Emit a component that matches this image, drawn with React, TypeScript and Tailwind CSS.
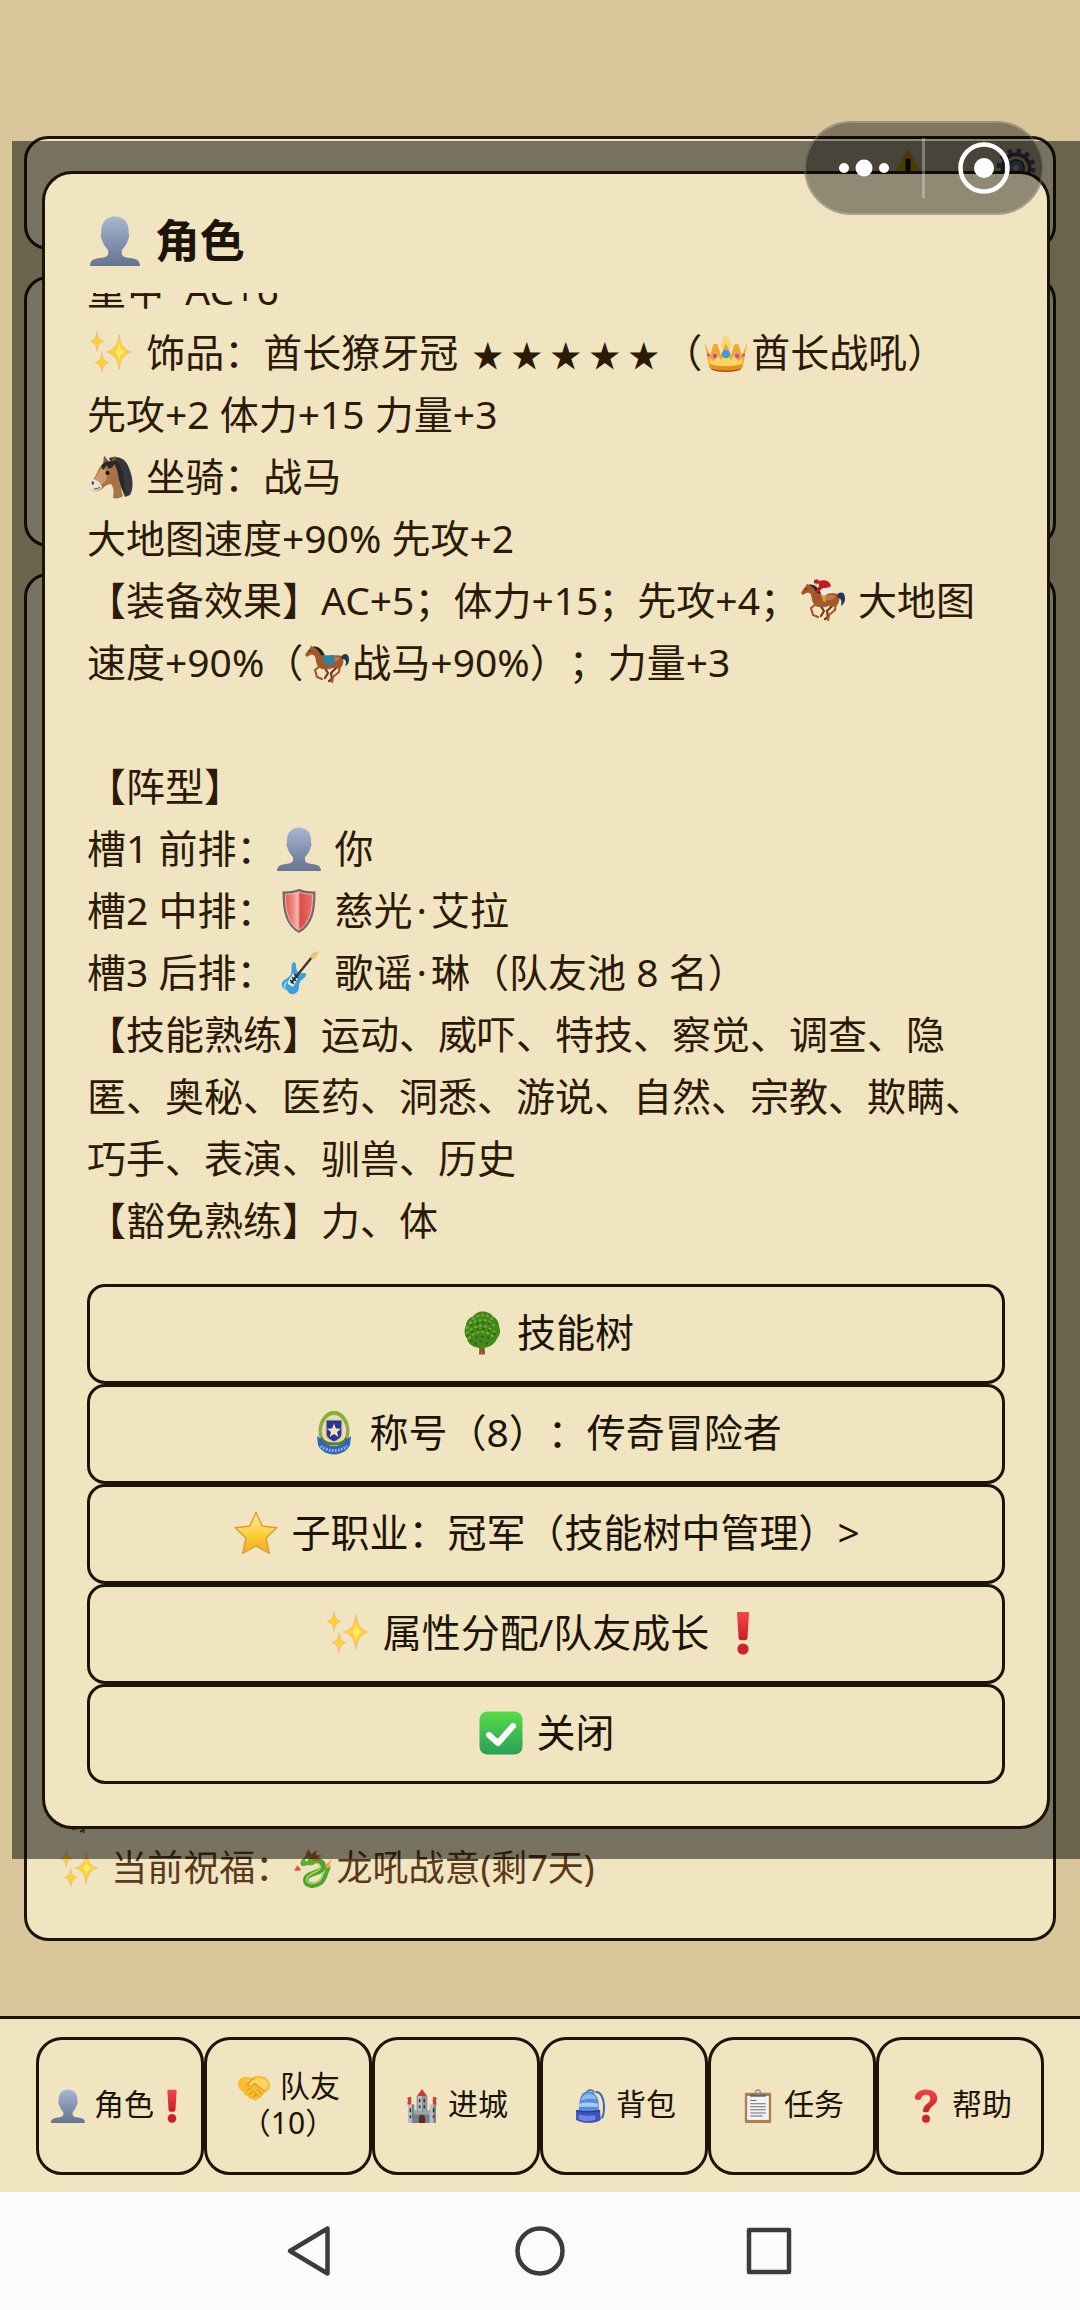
import { useState } from "react";
import type { ReactNode } from "react";
import clsx from "clsx";

type IconProps = { className?: string };

function Glyph({ className, children }: { className?: string; children: ReactNode }) {
  return (
    <svg
      viewBox="0 0 44 44"
      aria-hidden="true"
      className={clsx("inline-block shrink-0 align-[-8px]", className)}
    >
      {children}
    </svg>
  );
}

function PersonIcon({ className }: IconProps) {
  return (
    <Glyph className={className}>
      <defs>
        <linearGradient id="person" x1="0" y1="0" x2="0" y2="1">
          <stop offset="0" stopColor="#a9b7cf" />
          <stop offset="0.55" stopColor="#8191ad" />
          <stop offset="1" stopColor="#65748f" />
        </linearGradient>
      </defs>
      <path
        fill="url(#person)"
        d="M22 0.500c7 0 12 5 12 12v3.500c0.800 0.300 0.800 2.500-0.400 4.500-1.200 5-4 7.500-5.600 9.500v3c0 2.500 3 3.500 7 4 5.500 0.600 9 2 9 7H0c0-5 3.500-6.400 9-7 4-0.500 7-1.500 7-4v-3c-1.600-2-4.400-4.500-5.600-9.500-1.200-2-1.200-4.200-0.400-4.500v-3.500c0-7 5-12 12-12z"
      />
    </Glyph>
  );
}

function SparklesIcon({ className }: IconProps) {
  return (
    <Glyph className={className}>
      <g fill="#fbd32f" stroke="#f3b58a" strokeWidth="0.8">
        <path d="M30 3.500c1.500 9.500 3.500 15 12.500 17.500-9 2.500-11 8-12.500 17.500-1.500-9.500-3.500-15-12.500-17.500 9-2.500 11-8 12.500-17.500z" />
        <path d="M8 0.800c0.800 6 2.200 8.200 6.800 9.700-4.600 1.500-6 3.700-6.800 9.700-0.800-6-2.200-8.200-6.800-9.700 4.600-1.500 6-3.700 6.800-9.700z" />
        <path d="M13 21.500c0.800 6 2.200 8.500 7 10-4.800 1.500-6.200 4-7 10-0.800-6-2.200-8.500-7-10 4.800-1.500 6.200-4 7-10z" />
      </g>
      <path fill="#ffe76a" d="M30 12c1 5 2.500 7.500 7 9-4.500 1.500-6 4-7 9-0.600-5-1.500-7-4-9 2.500-2 3.400-4 4-9z" />
    </Glyph>
  );
}

function CrownIcon({ className }: IconProps) {
  return (
    <Glyph className={className}>
      <path fill="#f8d575" d="M22 4c3 2 5 6 5 12l-5 8-5-8c0-6 2-10 5-12z" />
      <path
        fill="#f2a72c"
        d="M0.500 11l5.500 14 3-10c0-3 5-3 5 0l3 9 5-12 5 12 3-9c0-3 5-3 5 0l3 10 5.500-14-5 26c-6 4.500-27 4.500-33 0z"
      />
      <path fill="#fbd466" d="M5 27l1 6c8 3 24 3 32 0l1-6-5 3-4-6-3 5-5-8-5 8-3-5-4 6z" />
      <path fill="#e98f1d" d="M6 33c8 3 24 3 32 0l-0.800 4c-8 3-22.400 3-30.400 0z" />
      <path fill="#a9481c" d="M7 37.500c8 2.500 22 2.500 30 0l-0.400 1.200c-8 3-21.200 3-29.200 0z" />
      <circle cx="22" cy="23" r="4.200" fill="#3e9bdc" />
      <circle cx="11" cy="25" r="2.200" fill="#b54fc0" />
      <circle cx="33" cy="25" r="2.200" fill="#b54fc0" />
      <circle cx="4.500" cy="24" r="1.500" fill="#d04796" />
      <circle cx="39.500" cy="24" r="1.500" fill="#d04796" />
    </Glyph>
  );
}

function HorseFaceIcon({ className }: IconProps) {
  return (
    <Glyph className={className}>
      <path fill="#35373b" d="M20 3c10-3 17 1 20 10 4 9 5 20 1 27l-5 2c-3-8-9-22-16-39z" />
      <path fill="#a87347" d="M14 9c6-4 13-2 16 6 3 9 0 14 4 26-2 2-7 3-10 2 1-6 1-10-2-14-5 0-7 4-11 6-4 2-9 2-10-2-1-5 4-9 6-13 2-4 3-8 7-11z" />
      <path fill="#cf9a6a" d="M13 13c3 0 5 4 5 8 0 5-4 8-8 10l-5-6c3-4 4-9 8-12z" />
      <path fill="#eae1d9" d="M4 24c4 1 8 4 9 8-3 4-8 5-11 3-3-3-2-8 2-11z" />
      <path fill="#8c5c37" d="M14 9l1-8.500 5 6zM22 6l4-5.500 1.500 8z" />
      <path fill="#26282b" d="M12 11c3-5 10-6 13-3 0 4-3 6-6 5l-1-3-4 5zM25 5c6 3 8 9 9 15 1 7 1 13 4 19-6-5-8-13-9-20-1-6-3-10-6-12z" />
      <circle cx="18.500" cy="18" r="2" fill="#1c130d" />
      <ellipse cx="3.800" cy="28" rx="1.200" ry="1.800" fill="#4b352c" />
      <path d="M5 34c3 0 5-1 6-2" fill="none" stroke="#4b352c" />
    </Glyph>
  );
}

// galloping horse shared by the mount and the jockey
function HorseBody() {
  return (
    <>
      <g fill="none" strokeWidth="2.200" strokeLinejoin="round" strokeLinecap="round">
        <path stroke="#6f371a" d="M19 26l4 6-3 5M32 26l-6 6 1 6-3 2" />
        <path stroke="#a4592c" d="M15 25l-5 4 2 7 5 2M35 23l-1 8-6 5-1 5" />
      </g>
      <path
        fill="#a4592c"
        d="M0 14c1-2 3-5 5-7l1-2.500 2 2c5 1 7 6 11 8 6 1 11-1 16 0 3 1 4 5 3 8-1 4-3 5-5 5-3-2-7 0-11 1-4 0-8-1-9-3-2-3-2-6-3-10-1-2-3-2-5-1.500L2 16z"
      />
      <path fill="#c47a45" d="M20 16c5 1 10-1 15 1-2 4-8 5-14 3z" />
      <path fill="#26211f" d="M7 6c6-2 11 3 13 9l-4-1c-2-4-5-7-9-8z" />
      <circle cx="5" cy="10" r="0.800" fill="#1c130d" />
    </>
  );
}

function HorseIcon({ className }: IconProps) {
  return (
    <Glyph className={className}>
      <HorseBody />
      <path fill="#153d4c" d="M36 16c3-5 8-3 8 2 0 4-1 6-4 7 2-4 1-7-3-7z" />
      <path fill="#2a86a8" d="M18 14c4 1 8 0 11 0l1 8c-4 2-7 2-11 1z" />
    </Glyph>
  );
}

function JockeyIcon({ className }: IconProps) {
  return (
    <Glyph className={className}>
      <HorseBody />
      <path fill="#24365a" d="M36 16c3-4 8-3 8 3 0 4-1 6-4 8 1-5 0-8-3-8z" />
      <path fill="#efe9e4" d="M24 6l6 1 1 6-5 2-3 3-3-2z" />
      <path fill="#c01f22" d="M18 2c6-2 11 0 12 5-2 2-6 2-8 2l-6 5-2-1 4-6z" />
      <circle cx="15.500" cy="2.800" r="2.600" fill="#b3202a" />
      <path fill="#e7b38a" d="M13.500 4l3.500 1-2 2z" />
      <path fill="#d9a72b" d="M21 16h3l1 7-3-1z" />
    </Glyph>
  );
}

function ShieldIcon({ className }: IconProps) {
  return (
    <Glyph className={className}>
      <defs>
        <linearGradient id="shield" x1="0" y1="0" x2="1" y2="0">
          <stop offset="0" stopColor="#d9504e" />
          <stop offset="0.3" stopColor="#f08783" />
          <stop offset="0.46" stopColor="#f7b9b3" />
          <stop offset="0.54" stopColor="#dd4b47" />
          <stop offset="1" stopColor="#e67873" />
        </linearGradient>
      </defs>
      <path
        d="M22 1c4 2 9 2.500 15.500 2.500 0 17-2 32-15.500 39.500C8.500 35.500 6.500 20.500 6.500 3.500 13 3.500 18 3 22 1z"
        fill="url(#shield)"
        stroke="#75696a"
        strokeWidth="2"
      />
      <path
        d="M22 3c4 1.600 8 2.200 13.500 2.300 0 15-2 28.500-13.500 35.500C10.500 33.800 8.500 20.300 8.500 5.300 14 5.200 18 4.600 22 3z"
        fill="none"
        stroke="#dcc9c6"
        strokeWidth="0.8"
      />
    </Glyph>
  );
}

function GuitarIcon({ className }: IconProps) {
  return (
    <Glyph className={className}>
      <path
        fill="#3ba0dd"
        d="M15 13c1-3 4-2 4 1 0 4 1 7 4 8 3 1 5-1 6 1 1 3-4 5-6 8-2 4 0 9-4 11-4 3-8 0-9-3-3-1-6-3-5-7 1-4 7-4 9-9 1-3 0-6 1-10z"
      />
      <path fill="#e9f6fc" d="M16 22l5 5-5 9-5-3c-1-3 3-6 5-11z" />
      <path d="M14 32L35 6" stroke="#3a3432" strokeWidth="2.400" />
      <path d="M13 29l4 4M15 26l4 4M17 23l4 4" stroke="#22272c" strokeWidth="1.400" />
      <path fill="#e5c873" d="M33 6l2-4 7-2-2 5-4 4z" />
      <path fill="#8ed0f3" d="M7 33c1-2 2-3 4-3-2 2-3 5-2 8-2-1-3-3-2-5z" />
    </Glyph>
  );
}

function TreeIcon({ className }: IconProps) {
  return (
    <Glyph className={className}>
      <path fill="#8d5b2d" d="M19.500 32h5l0.500 11.500h-6z" />
      <path
        fill="#45871c"
        d="M22 0.500c5-0.500 9 2 11 5 4 2 6 6 6 10 2 4 1 9-2 12-2 5-6 8-11 9-3 1-7 1-9 0-5-1-9-4-10-9-3-4-3-9-1-13 0-4 3-8 7-9 2-3 5-5 9-5z"
      />
      <path
        fill="none"
        stroke="#74b434"
        strokeWidth="2"
        strokeLinecap="round"
        strokeDasharray="1 4"
        d="M10 12c3-5 8-8 13-8 5 0 9 3 11 7M7 17c4-5 10-8 16-8 6 0 10 4 13 8M7 22c5-5 11-8 16-7 5 1 9 4 13 7M9 27c4-4 9-7 14-6 5 0 8 3 11 5"
      />
      <path
        fill="none"
        stroke="#2c6812"
        strokeWidth="2"
        strokeLinecap="round"
        strokeDasharray="1 5"
        d="M7 25c4-4 9-7 14-7 6 0 11 2 16 7M11 30c4-4 9-5 13-4 4 0 6 1 9 3M15 33c4-3 9-3 13 0M11 14c6-3 15-3 22 0"
      />
    </Glyph>
  );
}

function BadgeIcon({ className }: IconProps) {
  return (
    <Glyph className={className}>
      <ellipse cx="22" cy="20" rx="15.500" ry="19.500" fill="#93a758" />
      <ellipse cx="22" cy="20" rx="12" ry="16" fill="#e9dfae" />
      <path d="M9 12c4-8 9-11 13-11s9 3 13 11" fill="none" stroke="#78b82c" strokeWidth="2.500" />
      <path d="M14 9h16v15c-1 4-5 6-8 7-3-1-7-3-8-7z" fill="#2a34a0" stroke="#d9cf90" strokeWidth="1.200" />
      <path fill="#f4e7b4" d="M22 12.500l1.900 5 5.100 0.200-4 3.300 1.400 5-4.400-2.900-4.400 2.900 1.400-5-4-3.300 5.100-0.200z" />
      <path d="M9 27c5 8 21 8 26 0" fill="none" stroke="#5d7a2c" strokeWidth="3" />
      <path fill="#2f66b8" d="M5 25l5 4c3 4 7 6 12 6s9-2 12-6l5-4-1 9c-3 6-9 9.500-16 9.500S9 40 6 34z" />
      <path d="M9 35c6 6 20 6 26 0" fill="none" stroke="#9cc0e6" strokeWidth="3" strokeDasharray="1.500 1.500" />
    </Glyph>
  );
}

function StarIcon({ className }: IconProps) {
  return (
    <Glyph className={className}>
      <defs>
        <linearGradient id="star" x1="0" y1="0" x2="0" y2="1">
          <stop offset="0" stopColor="#fdf09a" />
          <stop offset="0.600" stopColor="#fbcb2d" />
          <stop offset="1" stopColor="#f3ab1b" />
        </linearGradient>
      </defs>
      <path
        d="M22 1.500l6.200 13.500 14.600 1.800-10.800 10.200 3.300 15.500-13.300-7.700-13.300 7.700 3.300-15.500L1.200 16.800l14.600-1.800z"
        fill="url(#star)"
        stroke="#dd9a3a"
        strokeWidth="1.400"
        strokeLinejoin="round"
      />
    </Glyph>
  );
}

function RedMarkDefs() {
  return (
    <defs>
      <linearGradient id="mark" x1="0" y1="0" x2="0" y2="1">
        <stop offset="0" stopColor="#f4474c" />
        <stop offset="1" stopColor="#c81d24" />
      </linearGradient>
    </defs>
  );
}

function BangIcon({ className }: IconProps) {
  return (
    <Glyph className={className}>
      <RedMarkDefs />
      <path fill="url(#mark)" d="M17 1h10c0.800 0 1 0.600 1 1.400l-1.600 25c-0.300 2.600-8.500 2.600-8.800 0l-1.600-25C16 1.600 16.200 1 17 1z" />
      <circle cx="22" cy="38" r="5.600" fill="#cf2027" />
    </Glyph>
  );
}

function QuestionIcon({ className }: IconProps) {
  return (
    <Glyph className={className}>
      <RedMarkDefs />
      <path
        fill="url(#mark)"
        d="M22 0.500c9 0 14.500 5 14.500 11.500 0 9-9.500 9.500-10.500 16.500-0.600 2.300-8 2.300-8-0.500 0.500-9 9.500-9 9.500-15.500 0-3-2-5-5.500-5s-5.500 2-6.500 5c-1 2.500-8 1.500-8-1 0.500-6 5.500-11 14.500-11z"
      />
      <circle cx="22" cy="38.500" r="5.200" fill="#d4242a" />
    </Glyph>
  );
}

function CheckIcon({ className }: IconProps) {
  return (
    <Glyph className={className}>
      <defs>
        <linearGradient id="check" x1="0" y1="0" x2="0" y2="1">
          <stop offset="0" stopColor="#55dc46" />
          <stop offset="1" stopColor="#27a15a" />
        </linearGradient>
      </defs>
      <rect x="0.500" y="0.500" width="43" height="43" rx="8" fill="url(#check)" />
      <path d="M10 24l9 8L34 15" fill="none" stroke="#fff" strokeWidth="6" strokeLinecap="round" strokeLinejoin="round" />
    </Glyph>
  );
}

function DragonIcon({ className }: IconProps) {
  return (
    <Glyph className={className}>
      <path
        d="M20 14c9-3 14 1 13 6-1 7-19 6-19 14 0 6 9 8 16 3 5-4 5-10 8-16"
        fill="none"
        stroke="#4fa431"
        strokeWidth="6"
        strokeLinecap="round"
      />
      <path
        d="M22 16c6-1 8 1 8 4 0 6-15 6-15 14 1 5 8 5 13 2 4-3 5-8 7-13"
        fill="none"
        stroke="#b4d65a"
        strokeWidth="1.600"
      />
      <path fill="#5aae35" d="M9 13c2-4 8-8 13-6 5 2 5 8 1 10-4 2-7 0-11 2-3 0-5-2-3-6z" />
      <path fill="#b06a27" d="M13 9L17 0l3 6 6-5-1 6 6 0-5 4 4 3-8-1-4-4z" />
      <path fill="#e2513c" d="M1 24l4-6 4 5-3 1z" />
      <path fill="#f0a53a" d="M36 17l7-6-3 6 2 2-5 3z" />
      <circle cx="15" cy="12" r="1.500" fill="#fff4b0" />
    </Glyph>
  );
}

function HandshakeIcon({ className }: IconProps) {
  return (
    <Glyph className={className}>
      <path
        fill="#f7bd33"
        d="M1 17c1-5 3-8 6-9 5-1 10 1 14 0 5-3 11-2 15 0 4 2 7 7 7 11 0 5-4 7-8 10-2 4-5 6-8 7-2 3-4 3-6 1-4 0-6-2-7-4-3-1-5-3-5-5-5-3-8-7-8-11z"
      />
      <path fill="#fdd65f" d="M4 13c5-3 10 0 13 0l-3 7c3 2 7-2 9-4l11 9c3-2 6-4 7-7-1-4-4-8-8-8-4-1-7-1-11 2-4 1-8-1-12-1-3 0-5 1-6 2z" />
      <path
        d="M21 10c-4 3-7 6-7 9 3 3 7-1 9-3l12 10M13 25l5-3M16 30l5-4M21 34l4-4M28 33l-5-5M32 30l-6-6"
        fill="none"
        stroke="#d89120"
        strokeWidth="1.300"
        strokeLinecap="round"
      />
    </Glyph>
  );
}

function CastleIcon({ className }: IconProps) {
  return (
    <Glyph className={className}>
      <path fill="#8c959c" d="M15 9h14v35h-14z" />
      <path fill="#b7bfc4" d="M4 20h8v24h-8zM32 20h8v24h-8zM17 9h5v30h-5z" />
      <path fill="#77818a" d="M9 20h3v24h-3zM37 20h3v24h-3zM12 29h20v15h-20z" />
      <path fill="#9fa8ae" d="M12 27h3v3h3v-3h3v3h3v-3h3v3h3v-3h2v6h-20z" />
      <path fill="#cf3b35" d="M22 0l6.500 9h-13zM4 13l4-3v10h-5zM40 13l-4-3v10h5zM1 12l6-2v3zM43 12l-6-2v3z" />
      <path fill="#30373d" d="M18 13h2v4h-2zM24 13h2v4h-2zM18 21h2v4h-2zM24 21h2v4h-2zM6 25h2v5h-2zM36 25h2v5h-2zM6 34h2v4h-2zM36 34h2v4h-2z" />
      <path fill="#5b2d1c" d="M18 44v-7c0-5 8-5 8 0v7z" />
    </Glyph>
  );
}

function BackpackIcon({ className }: IconProps) {
  return (
    <Glyph className={className}>
      <path d="M29 4c7-1 10 7 11 16 0.500 8 0 14-3 18" fill="none" stroke="#4b62ae" strokeWidth="2.600" />
      <path d="M18 5c0-5 9-5 9 0" fill="none" stroke="#5c6c8f" strokeWidth="2" />
      <path fill="#5b8ade" d="M8 20C9 8 13 3 20 3s11 5 13 13l1 24c-7 4-19 4-28 0z" />
      <path fill="#8db9f0" d="M11 13c3-8 13-9 18-3l1 4c-6-2-13-2-19 1z" />
      <path fill="#a8d0e8" d="M8 19c8-2 16-2 24 0v4H8z" />
      <path fill="#3f4fc0" d="M4 28c10 2 20 2 31 0l1 12c-8 5-23 5-32 0z" />
      <path fill="#6f83e2" d="M7 33c8 2 15 2 22 1v6c-7 2-15 2-22-1z" />
      <path d="M4 28c10 2 20 2 31 0" fill="none" stroke="#27348c" strokeWidth="1.500" />
    </Glyph>
  );
}

function ClipboardIcon({ className }: IconProps) {
  return (
    <Glyph className={className}>
      <rect x="5" y="5" width="34" height="39" rx="1.500" fill="#b07d4c" />
      <rect x="8" y="9" width="28" height="31" fill="#f4f3f4" />
      <path d="M12 15h8M12 19h20M12 23h20M12 27h20M12 31h20M12 35h16" stroke="#6d6d73" strokeWidth="1.300" />
      <path fill="#65625f" d="M12 7h20v3h-20z" />
      <circle cx="22" cy="4" r="3" fill="none" stroke="#8f8b88" strokeWidth="1.600" />
    </Glyph>
  );
}

function WarningIcon({ className }: IconProps) {
  return (
    <Glyph className={className}>
      <path fill="#f4c712" d="M19 5c1.500-3 4.500-3 6 0l17 33c1 2 0 4-2 4H4c-2 0-3-2-2-4z" />
      <path fill="#1f1a12" d="M19 13h6v17h-6zM19 34h6v5h-6z" />
    </Glyph>
  );
}

function GearIcon({ className }: IconProps) {
  return (
    <Glyph className={className}>
      <circle cx="22" cy="22" r="19" fill="none" stroke="#5c6480" strokeWidth="5" strokeDasharray="5 4.950" />
      <circle cx="22" cy="22" r="15" fill="none" stroke="#4a516a" strokeWidth="4" />
      <circle cx="22" cy="22" r="9" fill="#7a8298" stroke="#3c4156" strokeWidth="2" />
      <circle cx="22" cy="22" r="3" fill="#c9ccd6" />
    </Glyph>
  );
}

const bodyIcon = "mr-[3px] ml-[2px] size-[44px]";
const navIcon = "mx-[1px] size-[34px] align-[-6px]";

function Rating({ value }: { value: number }) {
  return (
    <span className="text-[31px] leading-none">
      {Array.from({ length: value }, (_, i) => (
        <span key={i} className="px-1">
          ★
        </span>
      ))}
    </span>
  );
}

function CharacterSheet() {
  return (
    <div className="mb-[33px] flex min-h-0 flex-1 flex-col justify-end overflow-hidden text-[39px] leading-[62px] text-[#2b1a08]">
      <p>重甲&nbsp; AC+6</p>
      <p>
        <SparklesIcon className={bodyIcon} /> 饰品：酋长獠牙冠 <Rating value={5} />（
        <CrownIcon className={bodyIcon} />
        酋长战吼）
      </p>
      <p>先攻+2 体力+15 力量+3</p>
      <p>
        <HorseFaceIcon className={bodyIcon} /> 坐骑：战马
      </p>
      <p>大地图速度+90% 先攻+2</p>
      <p>
        【装备效果】AC+5；体力+15；先攻+4；
        <JockeyIcon className={bodyIcon} /> 大地图速度+90%（
        <HorseIcon className={bodyIcon} />
        战马+90%）；力量+3
      </p>
      <p className="mt-[62px]">【阵型】</p>
      <p>
        槽1 前排：
        <PersonIcon className={bodyIcon} /> 你
      </p>
      <p>
        槽2 中排：
        <ShieldIcon className={bodyIcon} /> 慈光<span className="px-1">·</span>艾拉
      </p>
      <p>
        槽3 后排：
        <GuitarIcon className={bodyIcon} /> 歌谣<span className="px-1">·</span>琳（队友池 8 名）
      </p>
      <p>【技能熟练】运动、威吓、特技、察觉、调查、隐匿、奥秘、医药、洞悉、游说、自然、宗教、欺瞒、巧手、表演、驯兽、历史</p>
      <p>【豁免熟练】力、体</p>
    </div>
  );
}

function SheetButton({ onClick, children }: { onClick?: () => void; children: ReactNode }) {
  return (
    <button
      type="button"
      onClick={onClick}
      className="h-[100px] w-full rounded-[18px] border-3 border-[#1c1408] pb-1 text-[39px] leading-[62px] text-[#1c1408]"
    >
      {children}
    </button>
  );
}

function CharacterModal({ onClose }: { onClose: () => void }) {
  return (
    <div className="absolute top-[141px] right-0 bottom-[157px] left-3 flex flex-col bg-black/50 p-[30px]">
      <section
        role="dialog"
        aria-labelledby="sheet-title"
        className="flex min-h-0 flex-1 flex-col rounded-[30px] border-3 border-[#1c1408] bg-[#f1e4c1] p-[42px]"
      >
        <h1 id="sheet-title" className="mb-[27px] text-[45px] leading-[50px] font-bold text-[#1c1408]">
          <PersonIcon className="mx-[3px] size-[50px]" /> 角色
        </h1>
        <CharacterSheet />
        <div className="flex flex-col">
          <SheetButton>
            <TreeIcon className={bodyIcon} /> 技能树
          </SheetButton>
          <SheetButton>
            <BadgeIcon className={bodyIcon} /> 称号（8）：传奇冒险者
          </SheetButton>
          <SheetButton>
            <StarIcon className={bodyIcon} /> 子职业：冠军（技能树中管理）&gt;
          </SheetButton>
          <SheetButton>
            <SparklesIcon className={bodyIcon} /> 属性分配/队友成长 <BangIcon className={bodyIcon} />
          </SheetButton>
          <SheetButton onClick={onClose}>
            <CheckIcon className={bodyIcon} /> 关闭
          </SheetButton>
        </div>
      </section>
    </div>
  );
}

function Capsule() {
  return (
    <div className="absolute top-[121px] right-9 flex h-[94px] w-[240px] items-center rounded-full border-2 border-white/20 bg-black/40">
      <button type="button" aria-label="更多" className="flex w-[116px] items-center justify-center">
        <svg viewBox="0 0 60 60" className="size-[60px]">
          <circle cx="10" cy="30" r="5" fill="#fff" />
          <circle cx="30" cy="30" r="8.500" fill="#fff" />
          <circle cx="50" cy="30" r="5" fill="#fff" />
        </svg>
      </button>
      <div className="h-[60px] w-[3px] bg-white/30" />
      <button type="button" aria-label="关闭小程序" className="flex flex-1 items-center justify-center">
        <svg viewBox="0 0 60 60" className="size-[60px]">
          <circle cx="30" cy="30" r="23.500" fill="none" stroke="#fff" strokeWidth="4.500" />
          <circle cx="30" cy="30" r="10" fill="#fff" />
        </svg>
      </button>
    </div>
  );
}

const tabs: { key: string; icon: ReactNode; label: ReactNode }[] = [
  {
    key: "role",
    icon: <PersonIcon className={navIcon} />,
    label: (
      <>
        角色
        <BangIcon className={navIcon} />
      </>
    ),
  },
  { key: "party", icon: <HandshakeIcon className={navIcon} />, label: "队友（10）" },
  { key: "city", icon: <CastleIcon className={navIcon} />, label: "进城" },
  { key: "bag", icon: <BackpackIcon className={navIcon} />, label: "背包" },
  { key: "quest", icon: <ClipboardIcon className={navIcon} />, label: "任务" },
  { key: "help", icon: <QuestionIcon className={navIcon} />, label: "帮助" },
];

const card = "rounded-[24px] border-3 border-[#1c1408] bg-[#f1e4c1]";

export default function App() {
  const [isOpen, setIsOpen] = useState(true);

  return (
    <div className="relative flex min-h-screen flex-col bg-[#d9c69a] font-['Noto_Sans','Noto_Sans_CJK_SC',sans-serif] text-[#1c1408] [text-spacing-trim:space-all]">
      <main className="relative flex flex-1 flex-col gap-[26px] px-6 pt-[136px] pb-[75px]">
        <header className={clsx(card, "flex h-[114px] items-start justify-end gap-[70px] px-[17px] pt-[9px]")}>
          <WarningIcon className="size-[36px]" />
          <GearIcon className="size-[40px]" />
        </header>
        <section className={clsx(card, "h-[271px]")} />
        <section
          className={clsx(
            card,
            "flex flex-1 flex-col justify-end px-[30px] pb-[43px] text-[36px] leading-[54px] text-[#5a3a1a]"
          )}
        >
          <p>
            <HorseIcon className="mr-[3px] ml-[2px] size-[40px]" />
          </p>
          <p>
            <SparklesIcon className="mr-[3px] ml-[2px] size-[40px]" /> 当前祝福：
            <DragonIcon className="mr-[3px] ml-[2px] size-[40px]" />
            龙吼战意(剩7天)
          </p>
        </section>
        {isOpen && <CharacterModal onClose={() => setIsOpen(false)} />}
      </main>

      <nav className="grid grid-cols-6 border-t-3 border-[#1c1408] bg-[#f1e4c1] px-9 pt-[18px] pb-[17px]">
        {tabs.map((tab) => (
          <button
            key={tab.key}
            type="button"
            onClick={() => tab.key === "role" && setIsOpen(true)}
            className="h-[138px] rounded-[26px] border-3 border-[#1c1408] pb-1 text-[30px] leading-[35px]"
          >
            {tab.icon} {tab.label}
          </button>
        ))}
      </nav>

      <footer className="flex h-[118px] items-center justify-center gap-[180px] bg-[#fcfcfc]">
        <button type="button" aria-label="返回">
          <svg viewBox="0 0 48 52" className="h-[52px] w-[48px]" fill="none" stroke="#3c3c3c" strokeWidth="4.500" strokeLinejoin="round">
            <path d="M41.500 3.500v45L4 26z" />
          </svg>
        </button>
        <button type="button" aria-label="主页">
          <svg viewBox="0 0 52 52" className="size-[52px]" fill="none" stroke="#3c3c3c" strokeWidth="4.500">
            <circle cx="26" cy="26" r="22.500" />
          </svg>
        </button>
        <button type="button" aria-label="最近任务">
          <svg viewBox="0 0 48 52" className="h-[52px] w-[48px]" fill="none" stroke="#3c3c3c" strokeWidth="4.500" strokeLinejoin="round">
            <rect x="3" y="5" width="40" height="42" />
          </svg>
        </button>
      </footer>

      <Capsule />
    </div>
  );
}
